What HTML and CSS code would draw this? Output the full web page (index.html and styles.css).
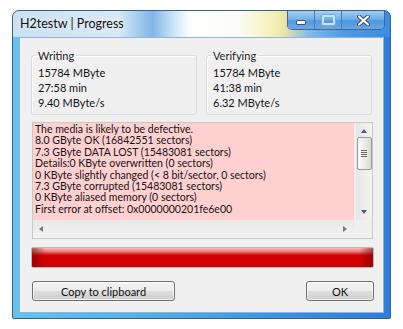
FILE: index.html
```html
<!DOCTYPE html>
<html lang="en">
<head>
  <meta charset="UTF-8">
  <title>H2testw | Progress</title>
  <link rel="stylesheet" href="styles.css">
</head>
<body>
  <div class="window">
    <div class="titlebar">
      <span class="title">H2testw | Progress</span>
      <div class="caption-buttons">
        <div class="cap cap-min"><span class="glyph-min"></span></div>
        <div class="cap cap-max"><span class="glyph-max"></span></div>
        <div class="cap cap-close">
          <svg width="13" height="11" viewBox="0 0 13 11">
            <path d="M2 1.5 L11 9.5 M11 1.5 L2 9.5" stroke="#3a4a60" stroke-width="4" stroke-linecap="round"/>
            <path d="M2 1.5 L11 9.5 M11 1.5 L2 9.5" stroke="#ffffff" stroke-width="2.2" stroke-linecap="round"/>
          </svg>
        </div>
      </div>
    </div>

    <div class="client">
      <div class="groups">
        <fieldset class="group">
          <legend>Writing</legend>
          <div>15784 MByte</div>
          <div>27:58 min</div>
          <div>9.40 MByte/s</div>
        </fieldset>
        <fieldset class="group">
          <legend>Verifying</legend>
          <div>15784 MByte</div>
          <div>41:38 min</div>
          <div>6.32 MByte/s</div>
        </fieldset>
      </div>

      <div class="log">
        <div class="log-main">
          <div class="log-text">
            <div>The media is likely to be defective.</div>
            <div>8.0 GByte OK (16842551 sectors)</div>
            <div>7.3 GByte DATA LOST (15483081 sectors)</div>
            <div>Details:0 KByte overwritten (0 sectors)</div>
            <div>0 KByte slightly changed (&lt; 8 bit/sector, 0 sectors)</div>
            <div>7.3 GByte corrupted (15483081 sectors)</div>
            <div>0 KByte aliased memory (0 sectors)</div>
            <div>First error at offset: 0x0000000201fe6e00</div>
          </div>
          <div class="vscroll">
            <span class="arrow arrow-up"></span>
            <div class="thumb"><span></span><span></span><span></span><span></span></div>
            <span class="arrow arrow-down"></span>
          </div>
        </div>
        <div class="hscroll">
          <div class="htrack">
            <span class="arrow arrow-left"></span>
            <span class="arrow arrow-right"></span>
          </div>
          <div class="corner"></div>
        </div>
      </div>

      <div class="progress"></div>

      <div class="actions">
        <button class="btn btn-copy">Copy to clipboard</button>
        <button class="btn btn-ok">OK</button>
      </div>
    </div>
  </div>
</body>
</html>
```

FILE: styles.css
```css
body {
  margin: 0;
  padding: 10px 0 0 12px;
  background: #ffffff;
  font-family: Lato, "Liberation Sans", sans-serif;
  font-size: 10.5px;
  color: #141414;
}

.window {
  box-sizing: border-box;
  width: 379px;
  height: 309px;
  border: 1px solid #3b5f86;
  border-radius: 7px 7px 2px 2px;
  background: linear-gradient(90deg, #63c3ee 0%, #52b0e8 35%, #3c93e0 70%, #2c7ed9 100%);
  display: flex;
  flex-direction: column;
  overflow: hidden;
}

.titlebar {
  height: 26px;
  display: flex;
  align-items: flex-start;
  justify-content: space-between;
  padding-left: 7px;
  padding-right: 5px;
  background: linear-gradient(90deg, #c9e1f3 0%, #d9e9f5 28%, #a6cdee 33%, #7fb6e8 37%, #c4e0f6 42%, #ffffff 47%, #fbfcf6 60%, #f6f0b8 69%, #e8e4a6 72%, #88bdeb 78%, #4b9ae5 88%, #3a8de0 100%);
}

.title {
  font-size: 12.5px;
  line-height: 26px;
  color: #101010;
  text-shadow: 0 0 6px rgba(255, 255, 255, 0.9);
}

.caption-buttons {
  display: flex;
  height: 18px;
  border: 1px solid #4a6585;
  border-top: none;
  border-radius: 0 0 5px 5px;
  overflow: hidden;
}

.cap {
  display: flex;
  align-items: center;
  justify-content: center;
  background: linear-gradient(180deg, #a3cff2 0%, #74b3ea 45%, #5398e2 55%, #68aaea 100%);
}

.cap-min {
  width: 26px;
  border-right: 1px solid #4f77a3;
}

.cap-max {
  width: 26px;
  border-right: 1px solid #4f77a3;
}

.cap-close {
  width: 42px;
  background: linear-gradient(180deg, #9fcdf2 0%, #6eaeea 45%, #4f96e0 55%, #65a8e8 100%);
}

.glyph-min {
  width: 8px;
  height: 3px;
  margin-top: 5px;
  background: #ffffff;
  border: 1px solid #44546a;
  border-radius: 1px;
}

.glyph-max {
  width: 9px;
  height: 6px;
  border: 2px solid #c6e2f8;
  outline: 1px solid #7fa6cc;
  border-radius: 1px;
}

.client {
  flex: 1;
  margin: 0 6px 5px 6px;
  background: #f0f0f0;
  border: 1px solid #95b3d3;
  display: flex;
  flex-direction: column;
}

.groups {
  display: flex;
  gap: 9px;
  margin: 11px 0 0 11px;
}

.group {
  box-sizing: border-box;
  width: 166px;
  height: 66px;
  margin: 0;
  padding: 3px 6px 0 6px;
  border: 1px solid #d5dde3;
  border-radius: 3px;
  box-shadow: inset 1px 1px 0 #ffffff;
  font-size: 11px;
  line-height: 15px;
}

.group legend {
  padding: 0 2px;
  margin-left: -2px;
  line-height: 13px;
  color: #222222;
}

.log {
  width: 341px;
  height: 117px;
  box-sizing: border-box;
  margin: 7px 0 0 12px;
  border: 1px solid #c8c8c8;
  display: flex;
  flex-direction: column;
}

.log-main {
  flex: 1;
  display: flex;
}

.log-text {
  flex: 1;
  background: #ffd0d0;
  padding: 1px 0 0 2px;
  line-height: 11.4px;
  white-space: nowrap;
  overflow: hidden;
}

.vscroll {
  width: 16px;
  display: flex;
  flex-direction: column;
  align-items: center;
  background: linear-gradient(90deg, #e6e6e6, #f4f4f4);
  border-left: 2px solid #f0f0f0;
}

.arrow {
  width: 0;
  height: 0;
  border: 0 solid transparent;
}

.arrow-up {
  margin-top: 6px;
  border-width: 0 3.5px 4px 3.5px;
  border-bottom-color: #4d5d78;
}

.arrow-down {
  margin-top: auto;
  margin-bottom: 6px;
  border-width: 4px 3.5px 0 3.5px;
  border-top-color: #4d5d78;
}

.thumb {
  box-sizing: border-box;
  width: 15px;
  height: 33px;
  margin-top: 4px;
  border: 1px solid #9a9a9a;
  border-radius: 2px;
  background: linear-gradient(90deg, #fbfbfb 0%, #ececec 50%, #d9d9d9 100%);
  display: flex;
  flex-direction: column;
  align-items: center;
  justify-content: center;
  gap: 1px;
}

.thumb span {
  width: 6px;
  height: 1px;
  background: #6c6c6c;
}

.hscroll {
  height: 18px;
  display: flex;
}

.htrack {
  flex: 1;
  display: flex;
  align-items: center;
  justify-content: space-between;
  padding: 0 7px 0 6px;
  background: linear-gradient(180deg, #e8e8e8, #f3f3f3);
}

.arrow-left {
  border-width: 3.5px 4px 3.5px 0;
  border-right-color: #7a7a7a;
}

.arrow-right {
  border-width: 3.5px 0 3.5px 4px;
  border-left-color: #7a7a7a;
}

.corner {
  width: 18px;
  background: #f0f0f0;
}

.progress {
  box-sizing: border-box;
  width: 343px;
  height: 21px;
  margin: 8px 0 0 11px;
  border: 1px solid #b8b8b8;
  border-radius: 2px;
  background:
    linear-gradient(90deg, rgba(110, 0, 0, 0.55) 0%, rgba(110, 0, 0, 0) 4%, rgba(110, 0, 0, 0) 96%, rgba(110, 0, 0, 0.55) 100%),
    linear-gradient(180deg, #f8c0c0 0%, #ee7a7a 18%, #d40000 38%, #d00000 100%);
}

.actions {
  display: flex;
  justify-content: space-between;
  margin: 13px 9px 0 12px;
}

.btn {
  height: 20px;
  padding: 0;
  font-family: Lato, "Liberation Sans", sans-serif;
  font-size: 11px;
  color: #111111;
  border: 1px solid #707070;
  border-radius: 3px;
  background: linear-gradient(180deg, #f4f4f4 0%, #ebebeb 48%, #dddddd 52%, #cfcfcf 100%);
  box-shadow: inset 0 0 0 1px rgba(255, 255, 255, 0.7);
}

.btn-copy {
  width: 143px;
}

.btn-ok {
  width: 68px;
}
```
